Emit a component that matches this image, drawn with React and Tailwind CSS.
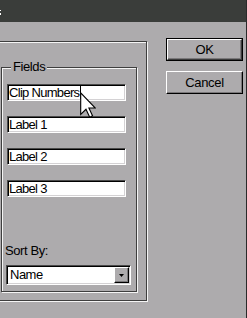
import React from 'react';

const font = { fontFamily: '"Liberation Sans", Arial, sans-serif' };

// sunken edit box
function Field({ value, caret }) {
  return (
    <div className="relative w-[119px] h-[17px] bg-white border border-t-[#4a4a4a] border-l-[#4a4a4a] border-r-white border-b-white shadow-[inset_1px_1px_0_#000,inset_-1px_-1px_0_#d4d2d4] pl-[1px] pt-[1px] text-[13px] tracking-[-0.7px] leading-[14px] text-black overflow-hidden whitespace-nowrap">
      {value}
      {caret && <span className="inline-block w-[1px] h-[13px] bg-black align-[-2px] ml-[1px]" />}
    </div>
  );
}

function Button({ label, isDefault }) {
  if (isDefault) {
    return (
      <div className="w-[77px] h-[23px] border border-black">
        <div className="w-full h-full flex items-center justify-center border border-t-white border-l-white border-r-[#3a3a3a] border-b-[#3a3a3a] shadow-[inset_-1px_-1px_0_#7a787a] text-[13px] tracking-[-0.3px] text-black">
          {label}
        </div>
      </div>
    );
  }
  return (
    <div className="w-[77px] h-[23px] flex items-center justify-center border border-t-white border-l-white border-r-black border-b-black shadow-[inset_-1px_-1px_0_#7a787a] text-[13px] tracking-[-0.3px] text-black">
      {label}
    </div>
  );
}

export default function App() {
  return (
    <div
      className="relative w-[247px] h-[318px] bg-[#adabad] border-r border-[#2a2a2a] overflow-hidden flex flex-col"
      style={font}
    >
      {/* title bar */}
      <div className="relative h-[22px] bg-[#3a3d3a] shrink-0">
        <span className="absolute left-0 top-[10px] w-[1px] h-[1px] bg-white" />
        <span className="absolute left-0 top-[13px] w-[1px] h-[2px] bg-white" />
      </div>

      <div className="flex flex-row">
        {/* outer frame */}
        <div className="ml-[-4px] mt-[19px] w-[151px] h-[260px] shrink-0 border border-[#3e3e3e] shadow-[1px_1px_0_#f4f4f4,inset_1px_1px_0_#f4f4f4]">
          {/* Fields group */}
          <div className="relative ml-[4px] mt-[25px] w-[136px] h-[225px] border border-[#3e3e3e] shadow-[1px_1px_0_#f4f4f4,inset_1px_1px_0_#f4f4f4]">
            <span className="absolute left-[9px] top-[-8px] px-[2px] bg-[#adabad] text-[13px] tracking-[-0.4px] leading-[14px] text-black">
              Fields
            </span>
            <div className="flex flex-col gap-[15px] pl-[5px] pt-[16px]">
              <Field value="Clip Numbers" caret />
              <Field value="Label 1" />
              <Field value="Label 2" />
              <Field value="Label 3" />
            </div>
            <div className="pl-[3px] mt-[47px] text-[13px] tracking-[-0.4px] leading-[14px] text-black">Sort By:</div>
            <div className="ml-[4px] mt-[7px] w-[125px] h-[20px] bg-white border border-t-[#4a4a4a] border-l-[#4a4a4a] border-r-white border-b-white shadow-[inset_1px_1px_0_#000,inset_-1px_-1px_0_#d4d2d4] flex items-center p-[1px]">
              <div className="flex-1 pl-[2px] text-[13px] tracking-[-0.5px] leading-[14px] text-black">Name</div>
              <div className="w-[15px] h-[16px] bg-[#adabad] border border-t-white border-l-white border-r-black border-b-black shadow-[inset_-1px_-1px_0_#7a787a] flex items-center justify-center">
                <svg width="5" height="3" viewBox="0 0 5 3">
                  <path d="M0 0h5L2.5 3z" fill="#000" />
                </svg>
              </div>
            </div>
          </div>
        </div>

        {/* buttons */}
        <div className="ml-[19px] mt-[16px] flex flex-col gap-[10px]">
          <Button label="OK" isDefault />
          <Button label="Cancel" />
        </div>
      </div>

      {/* mouse pointer */}
      <svg className="absolute left-[80px] top-[92px]" width="16" height="26" viewBox="0 0 11.5 18.5">
        <path
          d="M0.5 0.5V16L4.3 12.3L7 18L9 17L6.4 11.4H11Z"
          fill="#fff"
          stroke="#000"
          strokeWidth="0.8"
          strokeLinejoin="miter"
        />
      </svg>
    </div>
  );
}
